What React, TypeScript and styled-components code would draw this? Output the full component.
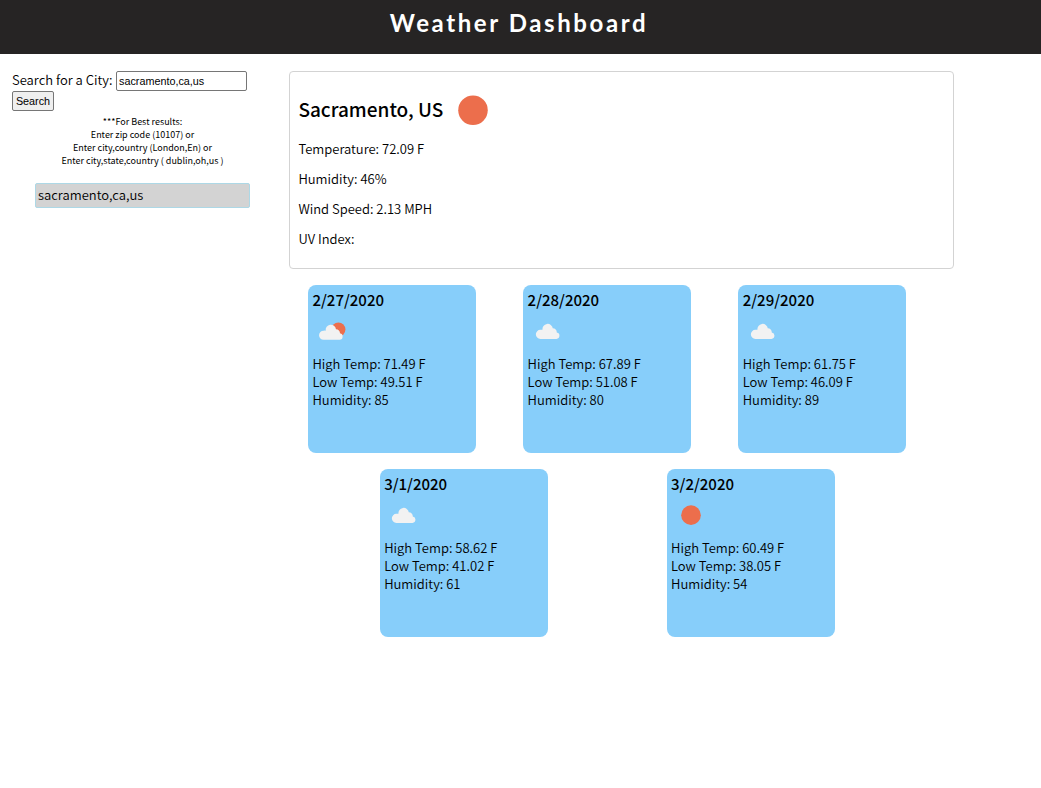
import React from "react";
import styled, { createGlobalStyle } from "styled-components";

const GlobalStyle = createGlobalStyle`
  * { box-sizing: border-box; }
  body {
    margin: 0;
    background: #fff;
    color: #000;
    font: 350 13px/18px "Noto Sans CJK SC", "Noto Sans", sans-serif;
  }
  h1, h2, h3, p { margin: 0; }
`;

const Header = styled.header`
  height: 54px;
  background: #262424;
  color: #fff;
  text-align: center;
`;

const Title = styled.h1`
  font: 700 24px/46px Lato, sans-serif;
  letter-spacing: 2.6px;
  padding-right: 3px;
`;

const Page = styled.div`
  display: flex;
`;

const Sidebar = styled.aside`
  width: 261px;
  padding: 17px 11px 0 12px;
`;

const SearchRow = styled.label`
  display: flex;
  align-items: center;
  height: 20px;
`;

const SearchLabel = styled.span`
  width: 104px;
  padding-bottom: 2px;
  white-space: nowrap;
`;

const SearchInput = styled.input`
  width: 131px;
  height: 20px;
  padding: 1px 2px;
  border: 1px solid #767676;
  border-radius: 2px;
  font: 10.8px "Liberation Sans", Arial, sans-serif;
`;

const SearchButton = styled.button`
  display: block;
  width: 42px;
  height: 20px;
  padding: 0;
  border: 1px solid #767676;
  border-radius: 2px;
  background: #efefef;
  color: #000;
  font: 10.8px "Liberation Sans", Arial, sans-serif;
`;

const Hints = styled.div`
  margin: 4px 0 0 23px;
  width: 215px;
  text-align: center;
  font-size: 9px;
  font-weight: 400;
  line-height: 13px;
`;

const HistoryItem = styled.div`
  margin: 16px 0 0 23px;
  width: 215px;
  height: 25px;
  padding: 0 2px;
  border: 1px solid #add8e6;
  border-radius: 2px;
  background: #d3d3d3;
  line-height: 21px;
`;

const Main = styled.main`
  width: 693px;
  padding-top: 17px;
`;

const Current = styled.section`
  margin-left: 28px;
  height: 198px;
  padding: 13px 8px 0 8.4px;
  border: 1px solid #d3d3d3;
  border-radius: 4px;
`;

const CityRow = styled.div`
  display: flex;
  align-items: center;
  height: 50px;
`;

const City = styled.h2`
  width: 144.4px;
  padding-bottom: 2px;
  white-space: nowrap;
  font-size: 19px;
  font-weight: 500;
  line-height: 30px;
`;

const Reading = styled.p`
  margin-top: 12px;
  &:first-of-type { margin-top: 5px; }
`;

const Forecast = styled.section`
  display: flex;
  flex-wrap: wrap;
  justify-content: space-evenly;
  margin: 8px 0.4px 0 0;
  padding: 0 8px;
`;

const Card = styled.article`
  width: 168px;
  height: 168px;
  margin: 8px;
  padding: 4px 4px 4px 4.3px;
  border-radius: 8px;
  background: #87cefa;
`;

const CardDate = styled.h3`
  font-size: 15px;
  font-weight: 500;
  line-height: 22px;
`;

const CardIcon = styled.div`
  height: 44px;
`;

const Picture = styled.svg`
  display: block;
`;

type Sky = "clear" | "few" | "cloudy";

const WeatherIcon = ({ sky, size }: { sky: Sky; size: number }) => (
  <Picture width={size} height={size} viewBox="0 0 50 50">
    {sky === "clear" && <circle cx="25" cy="25.2" r="12.3" fill="#ec6e4c" />}
    {sky === "few" && <circle cx="33" cy="23.1" r="8.8" fill="#ec6e4c" />}
    {sky !== "clear" && (
      <path
        transform={sky === "few" ? "translate(-1 1.6)" : "translate(0 .5)"}
        d="M15.5 34.4a5.7 5.7 0 0 1 0-11.4 5 5 0 0 1 2.6 0 6.5 6.5 0 0 1 12.9-1.8 4.9 4.9 0 0 1 5 5.1 4.1 4.1 0 0 1-.4 8.1Z"
        fill="#f2f2f2"
      />
    )}
  </Picture>
);

const readings = ["Temperature: 72.09 F", "Humidity: 46%", "Wind Speed: 2.13 MPH", "UV Index:"];

const days: { date: string; sky: Sky; high: string; low: string; humidity: number }[] = [
  { date: "2/27/2020", sky: "few", high: "71.49", low: "49.51", humidity: 85 },
  { date: "2/28/2020", sky: "cloudy", high: "67.89", low: "51.08", humidity: 80 },
  { date: "2/29/2020", sky: "cloudy", high: "61.75", low: "46.09", humidity: 89 },
  { date: "3/1/2020", sky: "cloudy", high: "58.62", low: "41.02", humidity: 61 },
  { date: "3/2/2020", sky: "clear", high: "60.49", low: "38.05", humidity: 54 },
];

export default function App() {
  return (
    <>
      <GlobalStyle />
      <Header>
        <Title>Weather Dashboard</Title>
      </Header>
      <Page>
        <Sidebar>
          <SearchRow>
            <SearchLabel>Search for a City:</SearchLabel>
            <SearchInput defaultValue="sacramento,ca,us" />
          </SearchRow>
          <SearchButton>Search</SearchButton>
          <Hints>
            <p>***For Best results:</p>
            <p>Enter zip code (10107) or</p>
            <p>Enter city,country (London,En) or</p>
            <p>Enter city,state,country ( dublin,oh,us )</p>
          </Hints>
          <HistoryItem>sacramento,ca,us</HistoryItem>
        </Sidebar>
        <Main>
          <Current>
            <CityRow>
              <City>Sacramento, US</City>
              <WeatherIcon sky="clear" size={60} />
            </CityRow>
            {readings.map((text) => (
              <Reading key={text}>{text}</Reading>
            ))}
          </Current>
          <Forecast>
            {days.map((day) => (
              <Card key={day.date}>
                <CardDate>{day.date}</CardDate>
                <CardIcon>
                  <WeatherIcon sky={day.sky} size={40} />
                </CardIcon>
                <p>High Temp: {day.high} F</p>
                <p>Low Temp: {day.low} F</p>
                <p>Humidity: {day.humidity}</p>
              </Card>
            ))}
          </Forecast>
        </Main>
      </Page>
    </>
  );
}
